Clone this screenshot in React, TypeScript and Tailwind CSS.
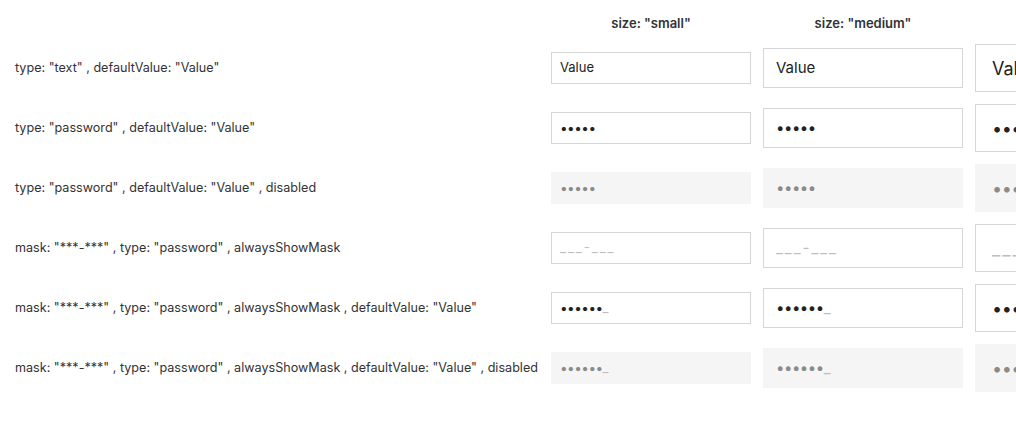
import React from 'react';

type Size = 'small' | 'medium' | 'large';

const sizeClass: Record<Size, string> = {
  small: 'h-[32px] px-[8px] text-[13px]',
  medium: 'h-[40px] px-[12px] text-[15px]',
  large: 'h-[48px] px-[16px] text-[18px]',
};

const dotClass: Record<Size, string> = {
  small: 'text-[13.5px] tracking-[-0.5px]',
  medium: 'text-[15px] tracking-[-0.5px]',
  large: 'text-[18px] tracking-[-0.5px]',
};

type Row = {
  label: string;
  kind: 'text' | 'password' | 'maskEmpty' | 'maskValue';
  disabled?: boolean;
};

const rows: Row[] = [
  { label: 'type: "text" , defaultValue: "Value"', kind: 'text' },
  { label: 'type: "password" , defaultValue: "Value"', kind: 'password' },
  { label: 'type: "password" , defaultValue: "Value" , disabled', kind: 'password', disabled: true },
  { label: 'mask: "***-***" , type: "password" , alwaysShowMask', kind: 'maskEmpty' },
  { label: 'mask: "***-***" , type: "password" , alwaysShowMask , defaultValue: "Value"', kind: 'maskValue' },
  { label: 'mask: "***-***" , type: "password" , alwaysShowMask , defaultValue: "Value" , disabled', kind: 'maskValue', disabled: true },
];

function Field({ row, size }: { row: Row; size: Size }) {
  const box = `w-[200px] shrink-0 flex items-center ${sizeClass[size]} ${
    row.disabled ? 'bg-[#f5f5f5] border border-transparent' : 'bg-white border border-[#d6d6d6]'
  }`;
  const ink = row.disabled ? 'text-[#8a8a8a]' : 'text-[#222]';

  if (row.kind === 'text') {
    return <div className={`${box} ${ink}`}>Value</div>;
  }
  if (row.kind === 'password') {
    return (
      <div className={box}>
        <span className={`${dotClass[size]} ${ink}`}>•••••</span>
      </div>
    );
  }
  if (row.kind === 'maskEmpty') {
    return (
      <div className={box}>
        <span className="text-[#bdbdbd] tracking-[2px]">___-___</span>
      </div>
    );
  }
  return (
    <div className={box}>
      <span className={`${dotClass[size]} ${ink}`}>••••••</span>
      <span className="text-[#bdbdbd]">_</span>
    </div>
  );
}

export default function App() {
  return (
    <div className="bg-white w-[1016px] h-[427px] overflow-hidden pl-[9px] font-['Inter','Liberation_Sans',sans-serif] text-[#333]">
      <div className="grid grid-cols-[536px_212px_212px_212px] w-max">
        {/* header */}
        <div className="h-[38px]" />
        <div className="h-[38px] pt-[13px] text-center text-[13px] leading-[20px] font-semibold">size: "small"</div>
        <div className="h-[38px] pt-[13px] text-center text-[13px] leading-[20px] font-semibold">size: "medium"</div>
        <div className="h-[38px] pt-[13px] text-center text-[13px] leading-[20px] font-semibold">size: "large"</div>

        {rows.map((row, i) => (
          <React.Fragment key={i}>
            <div className="h-[60px] px-[6px] flex items-center text-[12.6px] whitespace-nowrap">{row.label}</div>
            {(['small', 'medium', 'large'] as Size[]).map((s) => (
              <div key={s} className="h-[60px] px-[6px] flex items-center">
                <Field row={row} size={s} />
              </div>
            ))}
          </React.Fragment>
        ))}
      </div>
    </div>
  );
}
